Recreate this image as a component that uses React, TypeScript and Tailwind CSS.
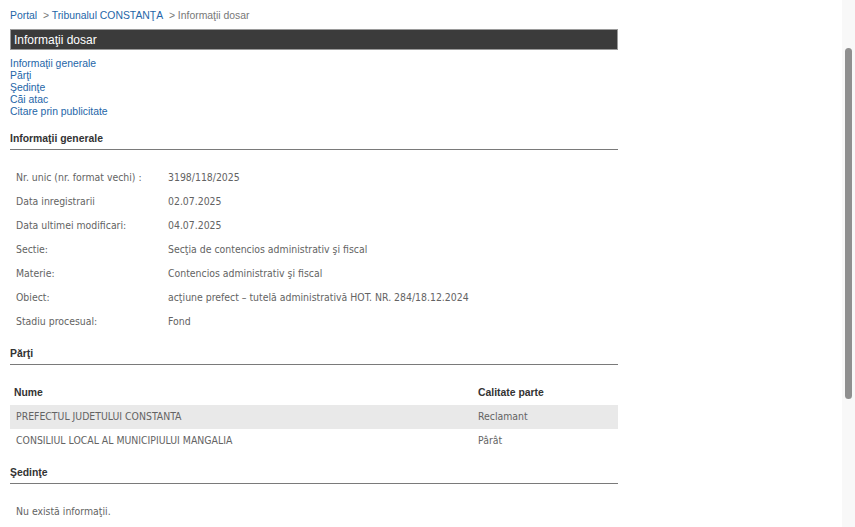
import React from 'react';

const infoRows: [string, string][] = [
    ['Nr. unic (nr. format vechi) :', '3198/118/2025'],
    ['Data inregistrarii', '02.07.2025'],
    ['Data ultimei modificari:', '04.07.2025'],
    ['Sectie:', 'Secţia de contencios administrativ şi fiscal'],
    ['Materie:', 'Contencios administrativ şi fiscal'],
    ['Obiect:', 'acţiune prefect – tutelă administrativă HOT. NR. 284/18.12.2024'],
    ['Stadiu procesual:', 'Fond'],
];

const parti: [string, string][] = [
    ['PREFECTUL JUDETULUI CONSTANTA', 'Reclamant'],
    ['CONSILIUL LOCAL AL MUNICIPIULUI MANGALIA', 'Pârât'],
];

const links = ['Informaţii generale', 'Părţi', 'Şedinţe', 'Căi atac', 'Citare prin publicitate'];

const SectionTitle: React.FC<{ title: string; className?: string }> = ({ title, className }) => (
    <div className={`border-b border-[#7a7a7a] pb-[4px] text-[10.4px] leading-[12px] font-bold text-[#333] ${className ?? ''}`}>
        {title}
    </div>
);

const bodyFont = "[font-family:'DejaVu_Sans_Condensed','Liberation_Sans',sans-serif]";

export default function App() {
    return (
        <div className="flex h-[527px] w-full overflow-hidden bg-white [font-family:'Liberation_Sans',Arial,sans-serif]">
            <main className="flex-1 pl-[10px]">
                <div className="w-[608px]">
                    {/* breadcrumb */}
                    <div className="pt-[10px] text-[10.4px] leading-[12px] text-[#777]">
                        <span className="text-[#2566a8]">Portal</span>
                        <span>&nbsp; &gt; </span>
                        <span className="text-[#2566a8]">Tribunalul CONSTANŢA</span>
                        <span>&nbsp; &gt; Informaţii dosar</span>
                    </div>

                    <div className="mt-[7px] flex h-[21px] items-center border border-[#9a9a9a] bg-[#3b3b3b] px-[3px] text-[12px] text-white">
                        Informaţii dosar
                    </div>

                    <div className="mt-[8px] flex flex-col text-[10.4px] leading-[12px] text-[#2566a8]">
                        {links.map((l) => (
                            <span key={l}>{l}</span>
                        ))}
                    </div>

                    <SectionTitle title="Informaţii generale" className="mt-[15px]" />
                    <div className={`mt-[16px] text-[10.4px] text-[#636363] ${bodyFont}`}>
                        {infoRows.map(([label, value]) => (
                            <div key={label} className="flex h-[24px] items-center px-[6px]">
                                <span className="w-[152px] shrink-0">{label}</span>
                                <span>{value}</span>
                            </div>
                        ))}
                    </div>

                    <SectionTitle title="Părţi" className="mt-[14px]" />
                    <div className="mt-[15px] flex h-[25px] items-center px-[4px] text-[10.4px] font-bold text-[#333]">
                        <span className="w-[464px]">Nume</span>
                        <span>Calitate parte</span>
                    </div>
                    <div className={`text-[10.4px] text-[#636363] ${bodyFont}`}>
                        {parti.map(([name, role], i) => (
                            <div key={name} className={`flex h-[24px] items-center px-[6px] ${i === 0 ? 'bg-[#e9e9e9]' : ''}`}>
                                <span className="w-[462px]">{name}</span>
                                <span>{role}</span>
                            </div>
                        ))}
                    </div>

                    <SectionTitle title="Şedinţe" className="mt-[14px]" />
                    <div className={`mt-[16px] flex h-[24px] items-center px-[6px] text-[10.4px] text-[#636363] ${bodyFont}`}>
                        Nu există informaţii.
                    </div>
                </div>
            </main>
            <aside className="w-[13px] shrink-0 bg-[#f8f8f8]">
                <div className="mx-auto mt-[48px] h-[351px] w-[7px] rounded-full bg-[#8f8f8f]" />
            </aside>
        </div>
    );
}
